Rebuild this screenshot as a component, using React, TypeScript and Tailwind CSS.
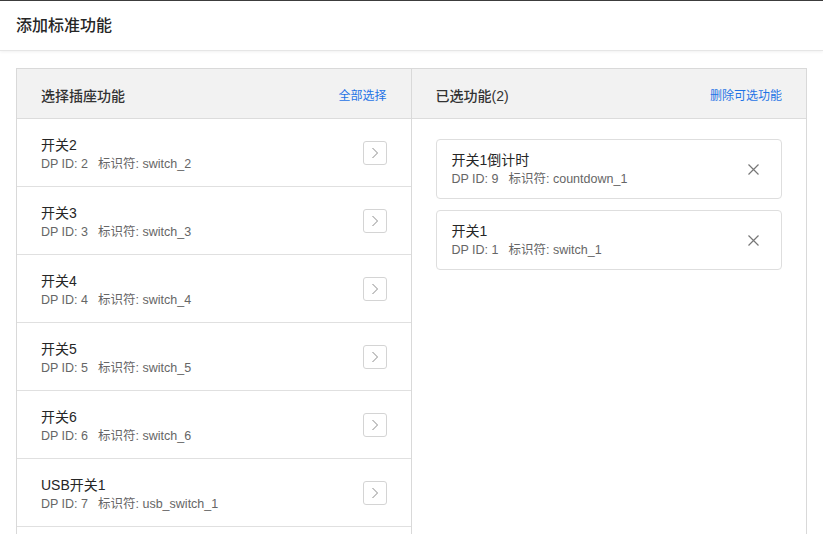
import React from "react";

const left = [
  { name: "开关2", id: 2, code: "switch_2" },
  { name: "开关3", id: 3, code: "switch_3" },
  { name: "开关4", id: 4, code: "switch_4" },
  { name: "开关5", id: 5, code: "switch_5" },
  { name: "开关6", id: 6, code: "switch_6" },
  { name: "USB开关1", id: 7, code: "usb_switch_1" },
];

const right = [
  { name: "开关1倒计时", id: 9, code: "countdown_1" },
  { name: "开关1", id: 1, code: "switch_1" },
];

export default function App() {
  return (
    <div
      className="w-[823px] h-[534px] overflow-hidden bg-white text-[#333]"
      style={{ fontFamily: '"Liberation Sans", "Noto Sans CJK SC", sans-serif' }}
    >
      <div className="border-t border-[#3c3c3c] h-[51px] flex items-center px-4 border-b border-b-[#e6e6e6] shadow-[0_1px_3px_rgba(0,0,0,0.06)]">
        <span className="text-[16px] font-medium text-[#262626] leading-[22px]">添加标准功能</span>
      </div>
      <div className="mx-4 mt-[17px] min-h-[500px] border border-[#d9d9d9] grid grid-cols-2">
        <div className="border-r border-[#d9d9d9]">
          <div className="bg-[#f2f2f2] border-b border-[#dcdcdc] h-[50px] px-6 pt-[16px] flex justify-between">
            <span className="text-[14px] leading-[22px] font-medium text-[#333]">选择插座功能</span>
            <span className="text-[12px] leading-[22px] text-[#1f74e6]">全部选择</span>
          </div>
          {left.map((r) => (
            <div key={r.id} className="h-[68px] border-b border-[#e0e0e0] px-6 flex items-center justify-between">
              <div className="pt-[3px]">
                <div className="text-[14px] leading-[20px] text-[#262626]">{r.name}</div>
                <div className="text-[12.5px] leading-[18px] text-[#666]">
                  <span className="mr-[10px]">DP ID: {r.id}</span>
                  <span>标识符: {r.code}</span>
                </div>
              </div>
              <div className="w-[24px] h-[24px] border border-[#d4d4d4] rounded-[3px] flex items-center justify-center">
                <svg width="8" height="12" viewBox="0 0 8 12" fill="none">
                  <path d="M1.5 1 L6.5 6 L1.5 11" stroke="#8c8c8c" strokeWidth="1" />
                </svg>
              </div>
            </div>
          ))}
        </div>
        <div>
          <div className="bg-[#f2f2f2] border-b border-[#dcdcdc] h-[50px] px-6 pt-[16px] flex justify-between">
            <span className="text-[14px] leading-[22px] font-medium text-[#333]">已选功能(2)</span>
            <span className="text-[12px] leading-[22px] text-[#1f74e6]">删除可选功能</span>
          </div>
          <div className="px-6 pt-[20px] flex flex-col gap-[11px]">
            {right.map((r) => (
              <div key={r.id} className="h-[60px] border border-[#dedede] rounded-[4px] pl-[15px] pr-[22px] flex items-center justify-between">
                <div>
                  <div className="text-[14px] leading-[20px] text-[#262626]">{r.name}</div>
                  <div className="text-[12.5px] leading-[18px] text-[#666]">
                    <span className="mr-[10px]">DP ID: {r.id}</span>
                    <span>标识符: {r.code}</span>
                  </div>
                </div>
                <svg width="11" height="11" viewBox="0 0 11 11">
                  <path d="M0.5 0.5 L10.5 10.5 M10.5 0.5 L0.5 10.5" stroke="#777" strokeWidth="1.2" />
                </svg>
              </div>
            ))}
          </div>
        </div>
      </div>
    </div>
  );
}
